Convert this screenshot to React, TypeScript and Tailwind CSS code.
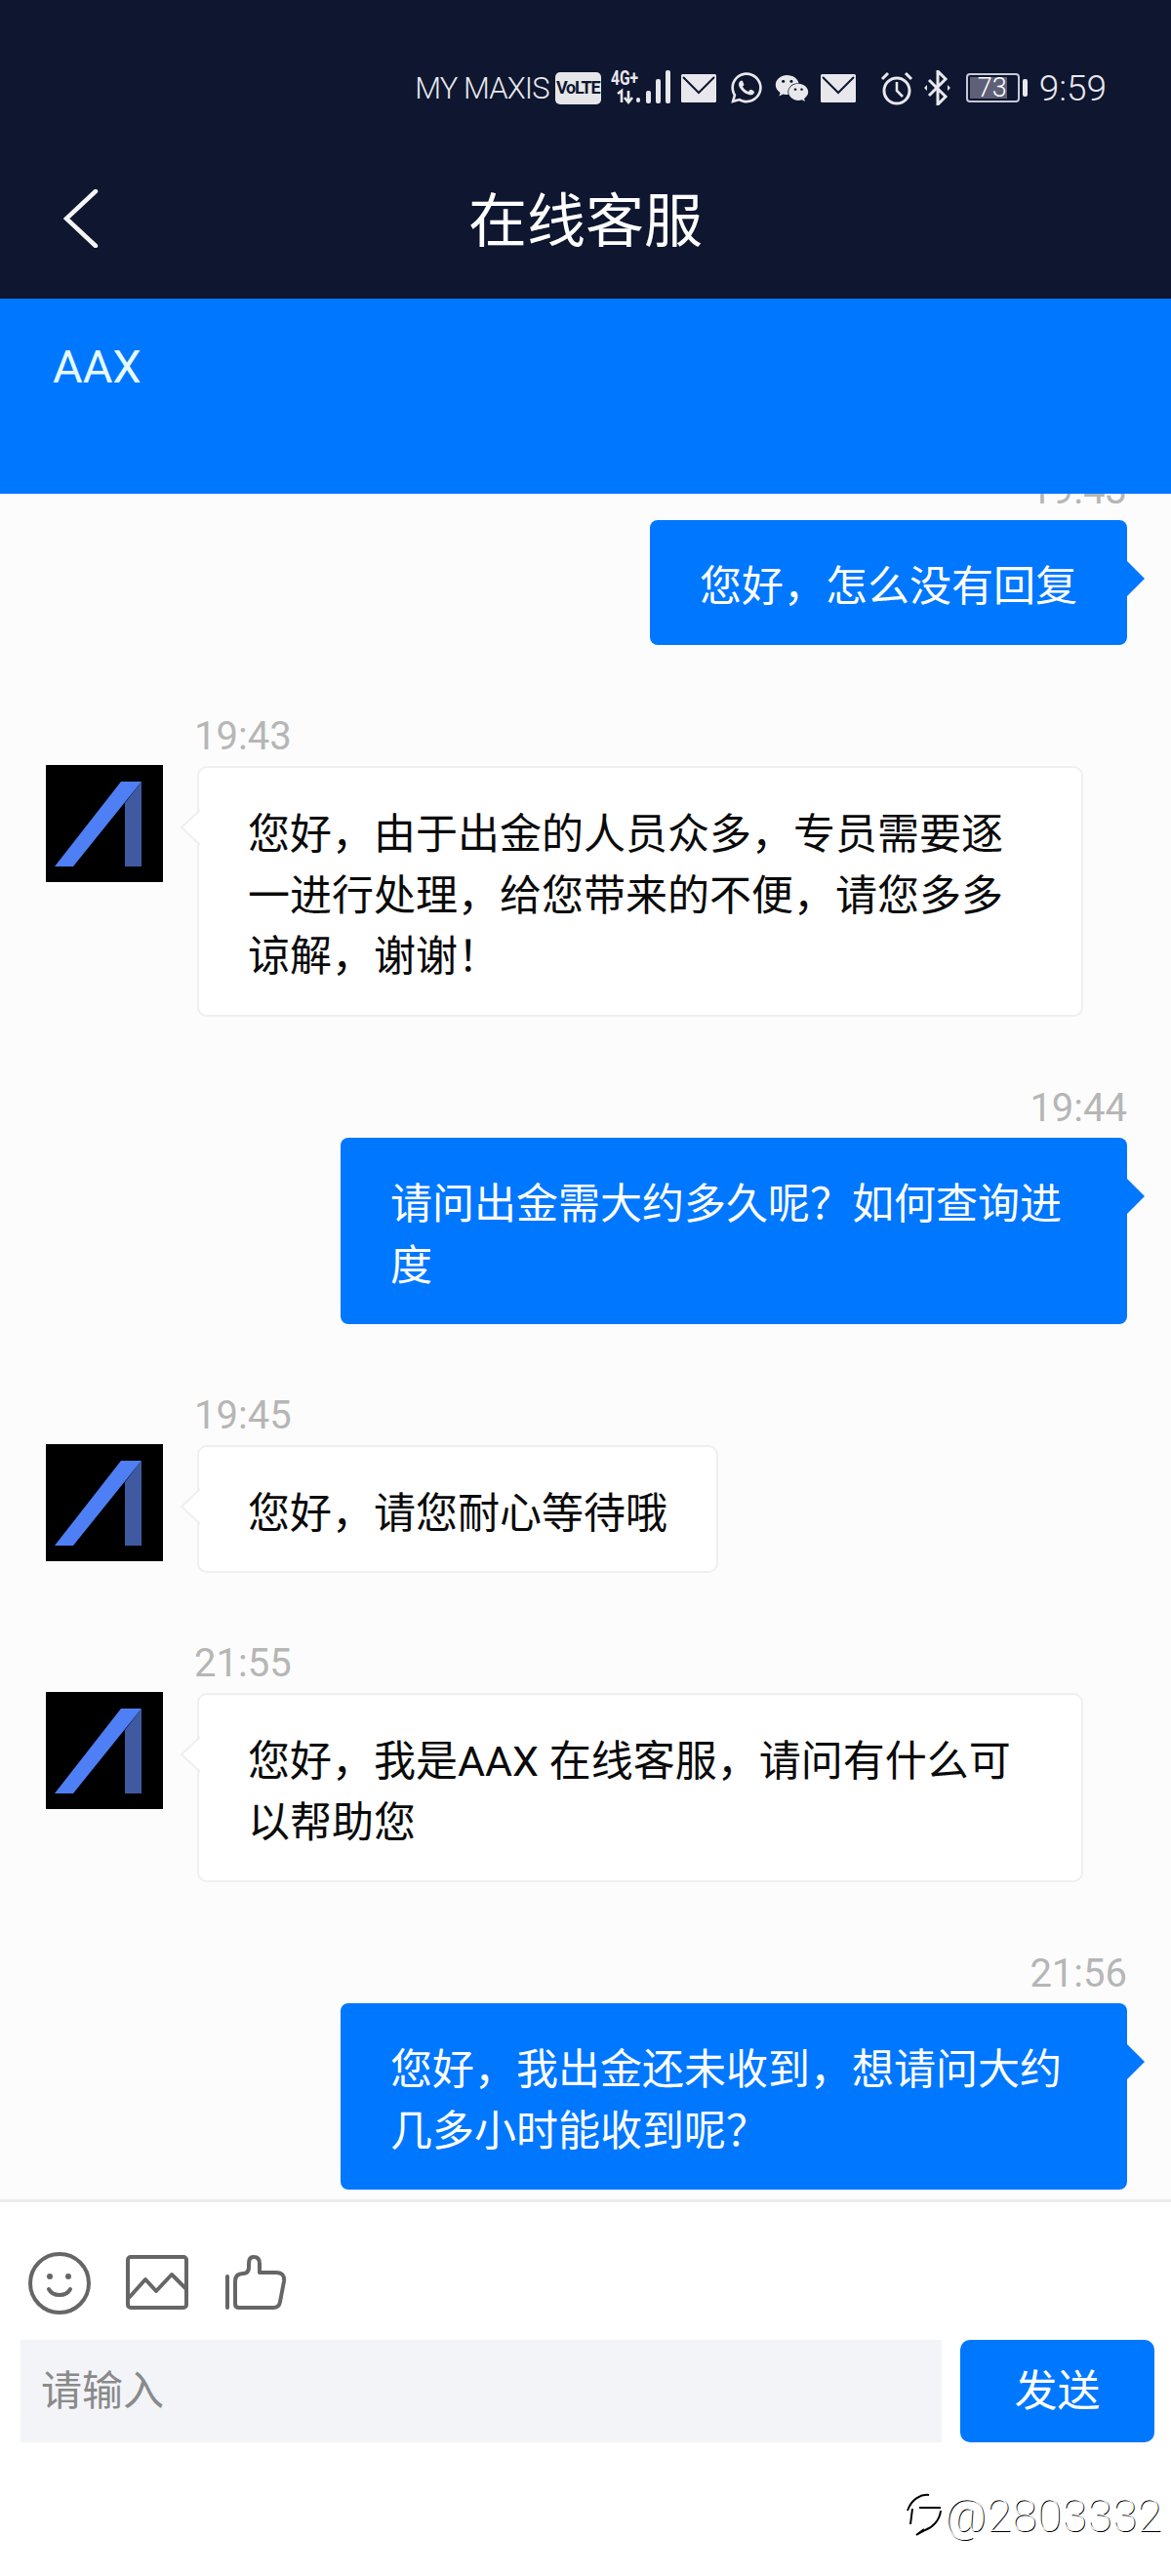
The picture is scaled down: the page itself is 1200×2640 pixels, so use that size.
import React from "react";
import { FaWhatsapp, FaWeixin } from "react-icons/fa";

function Mail() {
  return (
    <svg width="36" height="29" viewBox="0 0 36 29" className="shrink-0">
      <rect width="36" height="29" rx="1.5" fill="#e8e8ec" />
      <polyline points="2,3 18,19 34,3" fill="none" stroke="#0e1630" strokeWidth="2" />
    </svg>
  );
}

function Signal() {
  return (
    <svg width="62" height="36" viewBox="0 0 62 36" className="shrink-0 overflow-visible">
      <text x="0" y="15" fontFamily="Roboto" fontWeight="700" fontSize="20" fill="#e8e8ec" textLength="28" lengthAdjust="spacingAndGlyphs">4G+</text>
      <path d="M11 33V21l-4 3M18 21v11M14 28l4 5 4-5" fill="none" stroke="#e8e8ec" strokeWidth="2.6" />
      <rect x="26" y="28" width="4" height="5" rx="2" fill="#e8e8ec" />
      <rect x="36" y="21" width="5" height="13" rx="2" fill="#e8e8ec" />
      <rect x="46" y="9" width="5" height="25" rx="2" fill="#e8e8ec" />
      <rect x="56" y="0" width="5" height="34" rx="2" fill="#e8e8ec" />
    </svg>
  );
}

function Alarm() {
  return (
    <svg width="34" height="35" viewBox="0 0 34 35" className="shrink-0" fill="none" stroke="#e8e8ec">
      <circle cx="17" cy="20" r="13" strokeWidth="3" />
      <path d="M17 11v9l6 6" strokeWidth="2.6" />
      <path d="M2 8l6-6M26 2l6 6" strokeWidth="3" />
    </svg>
  );
}

function Bluetooth() {
  return (
    <svg width="27" height="36" viewBox="0 0 27 36" className="shrink-0">
      <path d="M5 10l17 17-8 8V1l8 8L5 26" fill="none" stroke="#e8e8ec" strokeWidth="3" />
      <path d="M0 18l3-3v6zM27 18l-3-3v6z" fill="#e8e8ec" />
    </svg>
  );
}

function Avatar() {
  return (
    <svg width="120" height="120" viewBox="0 0 120 120" className="shrink-0 bg-black">
      <g className="blur-[0.6px]">
        <polygon points="81,104 81,39 98,17 98,104" fill="#3f5aa0" />
        <polygon points="9,104 77,17 98,17 28,104" fill="#4f7ff5" />
      </g>
    </svg>
  );
}

function Time({ left, children }: { left?: boolean; children: React.ReactNode }) {
  return (
    <div className={`mb-[5px] h-[51px] text-[40px] leading-[51px] text-[#b6b6b6] ${left ? "-ml-[3px]" : ""}`}>
      {children}
    </div>
  );
}

function Outgoing({ time, children, className = "mt-[68px]" }: { time: string; children: React.ReactNode; className?: string }) {
  return (
    <div className={`flex flex-col items-end pr-[45px] ${className}`}>
      <Time>{time}</Time>
      <div className="relative max-w-[806px] rounded-[8px] bg-[#0077ff] px-[51px] pt-[37px] pb-[28px] text-[43px] leading-[63px] text-white">
        {children}
        <svg width="18" height="36" viewBox="0 0 18 36" className="absolute left-full top-[42px]">
          <polygon points="0,0 18,18 0,36" fill="#0077ff" />
        </svg>
      </div>
    </div>
  );
}

function Incoming({ time, children, className = "mt-[68px]" }: { time: string; children: React.ReactNode; className?: string }) {
  return (
    <div className={`flex pl-[47px] ${className}`}>
      <div className="pt-[55px]">
        <Avatar />
      </div>
      <div className="ml-[35px] flex flex-col items-start">
        <Time left>{time}</Time>
        <div className="relative max-w-[908px] rounded-[10px] border-2 border-[#efefef] bg-white px-[50px] pt-[37px] pb-[28px] text-[43px] leading-[62.5px] text-[#0a0a0a]">
          {children}
          <svg width="21" height="38" viewBox="0 0 21 38" className="absolute right-full top-[42px] -mr-[1px]">
            <polyline points="21,1 2,19 21,37" fill="#ffffff" stroke="#efefef" strokeWidth="2" />
          </svg>
        </div>
      </div>
    </div>
  );
}

export default function App() {
  return (
    <div className="flex h-[2640px] w-[1200px] flex-col overflow-hidden bg-white font-['Roboto','Noto_Sans_CJK_SC',sans-serif]">
      <header className="h-[306px] shrink-0 bg-[#0e1630] pt-[72px]">
        <div className="flex h-[36px] items-center justify-end pr-[66px] text-[#e8e8ec]">
          <span className="text-[31px] font-light leading-none tracking-[-0.9px]">MY MAXIS</span>
          <span className="ml-[6px] flex h-[33px] w-[47px] items-center justify-center rounded-[5px] bg-[#e6e6ea] text-[18px] font-bold leading-none tracking-[-1.2px] text-[#0e1630]">VoLTE</span>
          <span className="ml-[10px] flex"><Signal /></span>
          <span className="ml-[10px] flex"><Mail /></span>
          <FaWhatsapp className="ml-[13px] shrink-0 text-[36px]" />
          <FaWeixin className="ml-[11px] shrink-0 text-[35px]" />
          <span className="ml-[12px] flex"><Mail /></span>
          <span className="ml-[25px] flex"><Alarm /></span>
          <span className="ml-[11px] flex"><Bluetooth /></span>
          <div className="relative ml-[16px] flex h-[30px] w-[55px] shrink-0 items-stretch rounded-[4px] border-2 border-[#c8c8d4] p-[2px]">
            <div className="w-[38px] bg-[#5f5f78]" />
            <span className="absolute left-[6px] top-0 h-full w-[38px] text-center text-[27px] font-light leading-[26px] text-white">73</span>
          </div>
          <div className="ml-[3px] h-[18px] w-[5px] shrink-0 rounded-[2px] bg-[#e8e8ec]" />
          <span className="ml-[12px] text-[37px] font-light leading-none">9:59</span>
        </div>
        <div className="relative mt-[84px] flex h-[72px] items-center justify-center">
          <svg width="36" height="60" viewBox="0 0 36 60" className="absolute left-[65px] top-[2px]" fill="none" stroke="#f5f5f5" strokeWidth="4.5" strokeLinecap="round">
            <polyline points="33,2 3,30 33,58" />
          </svg>
          <span className="text-[60px] leading-[72px] text-white">在线客服</span>
        </div>
      </header>

      <div className="h-[200px] shrink-0 bg-[#0077ff] pl-[54px] pt-[42px] text-[47px] leading-[56px] text-[#e6fbff]">AAX</div>

      <main className="min-h-0 flex-1 overflow-hidden bg-[#fcfcfc]">
        <div className="-mt-[29px]">
          <Outgoing time="19:43" className="mt-0">您好，怎么没有回复</Outgoing>
          <Incoming time="19:43">您好，由于出金的人员众多，专员需要逐一进行处理，给您带来的不便，请您多多谅解，谢谢！</Incoming>
          <Outgoing time="19:44">请问出金需大约多久呢？如何查询进度</Outgoing>
          <Incoming time="19:45">您好，请您耐心等待哦</Incoming>
          <Incoming time="21:55" className="mt-[67px]">您好，我是AAX 在线客服，请问有什么可以帮助您</Incoming>
          <Outgoing time="21:56">您好，我出金还未收到，想请问大约几多小时能收到呢？</Outgoing>
        </div>
      </main>

      <footer className="h-[386px] shrink-0 border-t-[3px] border-[#ececec] bg-white">
        <div className="flex h-[141px] items-start pt-[51px]">
          <svg width="64" height="64" viewBox="0 0 64 64" className="ml-[29px]" fill="none" stroke="#666" strokeWidth="4">
            <circle cx="32" cy="32" r="30" />
            <circle cx="22" cy="25" r="3" fill="#666" stroke="none" />
            <circle cx="41" cy="25" r="3" fill="#666" stroke="none" />
            <path d="M21 38c4 8 18 8 22 0" strokeLinecap="round" />
          </svg>
          <svg width="64" height="56" viewBox="0 0 64 56" className="ml-[36px] mt-[3px]" fill="none" stroke="#666" strokeWidth="4" strokeLinejoin="round">
            <rect x="2" y="2" width="60" height="52" rx="3" />
            <polyline points="3,44 20,25 31,37 47,20 62,35" />
          </svg>
          <svg width="64" height="56" viewBox="0 0 64 56" className="ml-[37px] mt-[3px]" fill="none" stroke="#666" strokeWidth="4" strokeLinecap="round" strokeLinejoin="round">
            <path d="M3 22v32" />
            <path d="M11 50V27q0-8 8-8q6 0 6-7V9q0-7 5-7q6 0 6 7v9h17q9 0 8 9l-4 21q-1 6-7 6H15q-4 0-4-4z" />
          </svg>
        </div>
        <div className="flex items-stretch pl-[21px]">
          <div className="flex h-[105px] w-[944px] items-center bg-[#f2f4f8] pl-[21px] text-[42px] text-[#8a8a8a]">请输入</div>
          <button className="ml-[19px] h-[105px] w-[199px] rounded-[10px] bg-[#0077ff] text-[44px] text-white">发送</button>
        </div>
        <div className="mt-[52px] flex items-center justify-end pr-[9px]">
          <svg width="38" height="46" viewBox="0 0 38 46" fill="none" stroke="#000" strokeWidth="2">
            <path d="M2 18C6 6 16 1 24 2" />
            <path d="M7 16l-2 16" />
            <path d="M14 15h22" />
            <path d="M36 18c-1 10-8 17-16 20l-9 5 8-6" />
          </svg>
          <span className="ml-[2px] text-[46px] font-thin leading-[46px] tracking-[0.5px] text-white [text-shadow:1px_1px_0_#000]">@2803332</span>
        </div>
      </footer>
    </div>
  );
}
